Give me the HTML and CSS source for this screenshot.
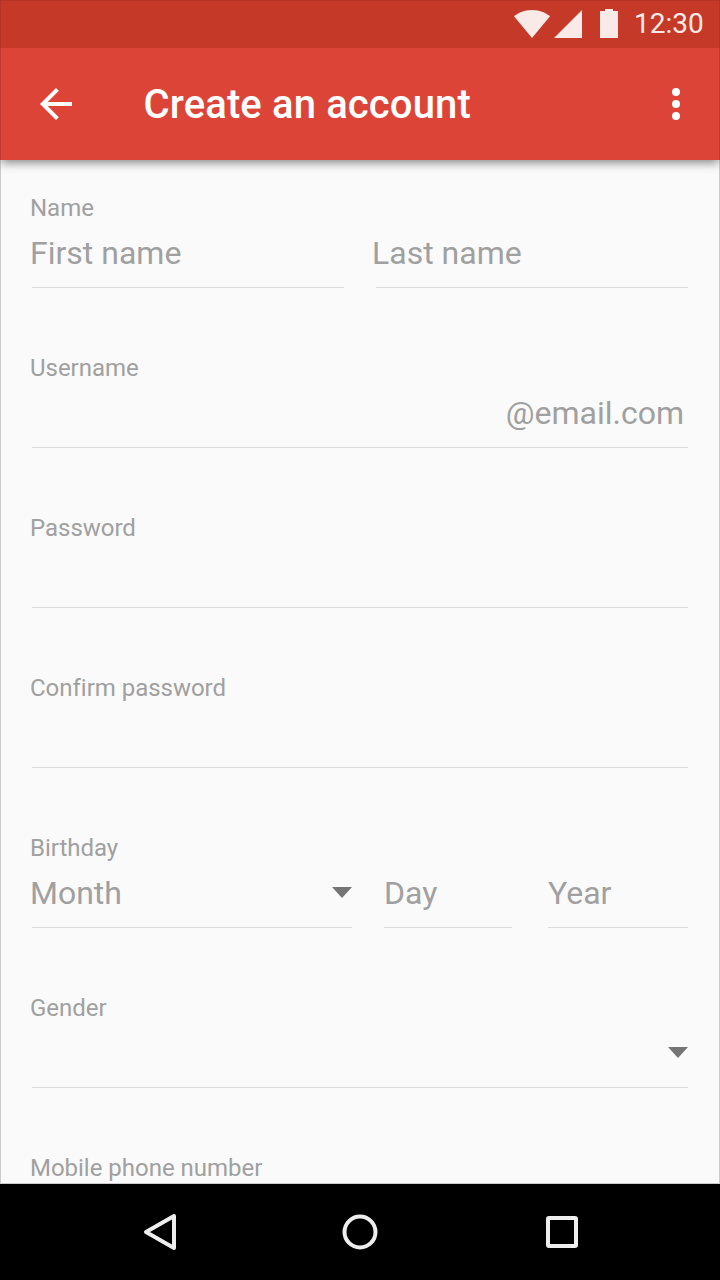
FILE: index.html
```html
<!DOCTYPE html>
<html lang="en">
<head>
<meta charset="utf-8">
<title>Create an account</title>
<link rel="stylesheet" href="styles.css">
</head>
<body>
<div class="screen">
  <header class="header">
    <div class="status">
      <svg class="ic-wifi" width="36" height="28" viewBox="0 0 36 28"><path d="M18 28 0 6.200C3 3.600 10 0 18 0s15 3.600 18 6.200z"/></svg>
      <svg class="ic-signal" width="28" height="28" viewBox="0 0 28 28"><path d="M0 28 28 0v28z"/></svg>
      <svg class="ic-battery" width="18" height="29" viewBox="0 0 18 29"><path d="M5 2V0h8v2h4.500q.5 0 .5.500V29H0V2.500Q0 2 .5 2z"/></svg>
      <span class="time">12:30</span>
    </div>
    <div class="appbar">
      <svg class="ic-back" width="48" height="48" viewBox="0 0 24 24"><path d="M20 11H7.830l5.590-5.590L12 4l-8 8 8 8 1.410-1.410L7.830 13H20v-2z"/></svg>
      <h1 class="title">Create an account</h1>
      <div class="more"><i></i><i></i><i></i></div>
    </div>
  </header>
  <main class="form">
    <section class="field">
      <div class="label">Name</div>
      <div class="row row-name">
        <div class="control">First name</div>
        <div class="control">Last name</div>
      </div>
    </section>
    <section class="field">
      <div class="label">Username</div>
      <div class="row"><div class="control control-end">@email.com</div></div>
    </section>
    <section class="field">
      <div class="label">Password</div>
      <div class="row"><div class="control"></div></div>
    </section>
    <section class="field">
      <div class="label">Confirm password</div>
      <div class="row"><div class="control"></div></div>
    </section>
    <section class="field">
      <div class="label">Birthday</div>
      <div class="row row-birth">
        <div class="control control-select">Month<span class="caret"></span></div>
        <div class="control">Day</div>
        <div class="control">Year</div>
      </div>
    </section>
    <section class="field">
      <div class="label">Gender</div>
      <div class="row"><div class="control control-select"><span></span><span class="caret"></span></div></div>
    </section>
    <section class="field">
      <div class="label">Mobile phone number</div>
    </section>
  </main>
  <nav class="navbar">
    <svg width="40" height="44" viewBox="0 0 40 44"><path class="nav-stroke" d="M34 6 6 22l28 16z"/></svg>
    <svg width="40" height="40" viewBox="0 0 40 40"><circle class="nav-stroke" cx="20" cy="20" r="15.500"/></svg>
    <svg width="40" height="40" viewBox="0 0 40 40"><rect class="nav-stroke" x="8" y="6" width="28" height="28" rx="1"/></svg>
  </nav>
</div>
</body>
</html>
```
FILE: styles.css
```css
* { box-sizing: border-box; }
html, body { margin: 0; padding: 0; }
body { width: 720px; height: 1280px; overflow: hidden; font-family: Roboto, sans-serif; background: #fafafa; }
.screen { width: 720px; height: 1280px; display: flex; flex-direction: column; overflow: hidden; }
.header { position: relative; z-index: 2; flex: none; box-shadow: 0 4px 9px -1px rgba(0,0,0,.45); }
.status { height: 48px; background: #c53929; display: flex; align-items: center; padding-right: 16px; box-shadow: inset 1px 1px rgba(0,0,0,.08), inset -1px 0 rgba(0,0,0,.08); }
.status svg { fill: #f9eae8; flex: none; }
.ic-wifi { margin-left: 514px; }
.ic-signal { margin-left: 4px; }
.ic-battery { margin-left: 18px; margin-bottom: 1px; }
.time { margin-left: 16px; font-size: 28px; line-height: 48px; color: #f9eae8; }
.appbar { height: 112px; background: #dd4438; display: flex; align-items: center; padding-left: 32px; box-shadow: inset 1px 0 rgba(0,0,0,.12), inset -1px 0 rgba(0,0,0,.12); }
.ic-back { fill: #fff; flex: none; }
.title { margin: 0 0 0 64px; padding-top: 2px; font-size: 40px; font-weight: 500; line-height: 112px; letter-spacing: .13px; color: #fff; flex: 1; text-indent: -.5px; }
.more { width: 8px; margin-right: 40px; display: flex; flex-direction: column; gap: 4px; }
.more i { width: 8px; height: 8px; border-radius: 50%; background: #fff; }
.form { flex: 1; min-height: 0; overflow: hidden; padding: 0 31px; background: #fafafa; border: solid #ccc; border-width: 0 1px 1px; opacity: .999; }
.field { height: 160px; padding-top: 32px; }
.label { margin-left: -2px; font-size: 24px; line-height: 32px; letter-spacing: -.02px; color: #a0a0a0; }
.row { display: flex; height: 64px; }
.row-name { gap: 32px; }
.row-name .control { flex: 1; text-indent: -2px; }
.row-name .control:nth-child(2) { text-indent: -4px; }
.row-birth .control { flex: none; }
.row-birth .control:nth-child(1) { width: 320px; margin-right: 32px; text-indent: -2px; }
.row-birth .control:nth-child(2) { width: 128px; margin-right: 36px; }
.row-birth .control:nth-child(3) { width: 140px; }
.control { flex: 1; height: 64px; border-bottom: 1px solid #dcdcdc; font-size: 32px; line-height: 58px; color: #a0a0a0; }
.control-end { text-align: right; padding-right: 4px; }
.control-select { display: flex; align-items: center; justify-content: space-between; padding-bottom: 6px; }
.caret { width: 0; height: 0; border-left: 10px solid transparent; border-right: 10px solid transparent; border-top: 11px solid #757575; }
.navbar { flex: none; height: 96px; background: #000; display: flex; align-items: center; justify-content: space-between; padding: 0 140px; }
.nav-stroke { fill: none; stroke: #eee; stroke-width: 4; stroke-linejoin: round; }
```
